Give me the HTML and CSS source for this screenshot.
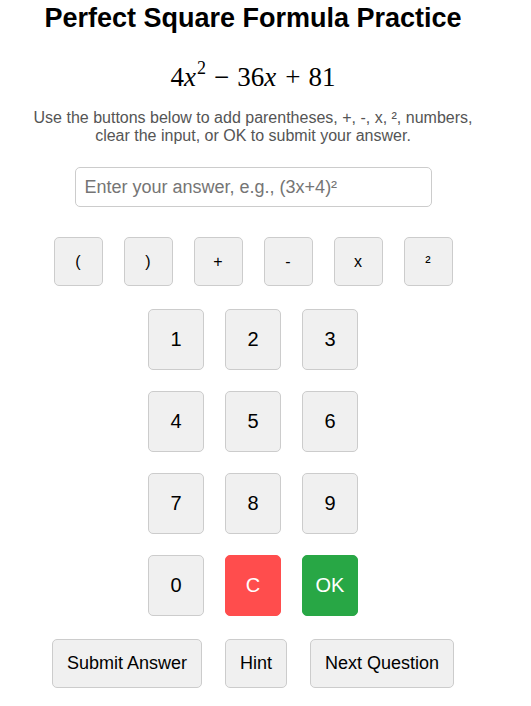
FILE: index.html
```html
<!DOCTYPE html>
<html>
<head>
<meta charset="utf-8">
<link rel="stylesheet" href="styles.css">
</head>
<body>
<div class="app">
  <h1 class="title">Perfect Square Formula Practice</h1>
  <div class="math"><span class="n">4</span><i>x</i><sup>2</sup><span class="op">−</span>36<i>x</i><span class="op">+</span>81</div>
  <p class="hint-text">Use the buttons below to add parentheses, +, -, x, ², numbers, clear the input, or OK to submit your answer.</p>
  <input class="answer" type="text" placeholder="Enter your answer, e.g., (3x+4)²">
  <div class="ops">
    <button class="btn op-btn">(</button>
    <button class="btn op-btn">)</button>
    <button class="btn op-btn">+</button>
    <button class="btn op-btn">-</button>
    <button class="btn op-btn">x</button>
    <button class="btn op-btn">²</button>
  </div>
  <div class="pad">
    <button class="btn key">1</button>
    <button class="btn key">2</button>
    <button class="btn key">3</button>
    <button class="btn key">4</button>
    <button class="btn key">5</button>
    <button class="btn key">6</button>
    <button class="btn key">7</button>
    <button class="btn key">8</button>
    <button class="btn key">9</button>
    <button class="btn key">0</button>
    <button class="btn key clear">C</button>
    <button class="btn key ok">OK</button>
  </div>
  <div class="actions">
    <button class="btn action">Submit Answer</button>
    <button class="btn action">Hint</button>
    <button class="btn action">Next Question</button>
  </div>
</div>
</body>
</html>
```

FILE: styles.css
```css
html, body {
  margin: 0;
  padding: 0;
  background: #fff;
}
body {
  font-family: "Liberation Sans", Arial, sans-serif;
  color: #000;
}
.app {
  width: 490px;
  margin: 0 8px;
  display: flex;
  flex-direction: column;
  align-items: center;
  text-align: center;
}
.title {
  font-size: 27px;
  font-weight: bold;
  line-height: 31px;
  margin: 3px 0 0 0;
}
.math {
  font-family: "Liberation Serif", "Times New Roman", serif;
  font-size: 27px;
  line-height: 30px;
  margin-top: 28px;
}
.math i {
  font-style: italic;
  padding-right: 1px;
}
.math sup {
  font-size: 18px;
  line-height: 0;
  vertical-align: 12px;
}
.math .op {
  padding: 0 8px;
}
.hint-text {
  font-size: 16px;
  line-height: 18px;
  color: #555;
  margin: 17px 0 0 0;
  width: 460px;
}
.answer {
  box-sizing: border-box;
  width: 357px;
  height: 40px;
  margin-top: 22px;
  border: 1px solid #ccc;
  border-radius: 5px;
  padding: 0 9px;
  font-family: "Liberation Sans", Arial, sans-serif;
  font-size: 18px;
  color: #000;
  outline: none;
}
.answer::placeholder {
  color: #757575;
}
.btn {
  box-sizing: border-box;
  font-family: "Liberation Sans", Arial, sans-serif;
  background: #f0f0f0;
  border: 1px solid #ccc;
  border-radius: 5px;
  color: #000;
  padding: 0;
  margin: 0;
}
.ops {
  display: flex;
  gap: 21px;
  margin-top: 30px;
}
.op-btn {
  width: 49px;
  height: 49px;
  font-size: 16px;
}
.pad {
  display: grid;
  grid-template-columns: repeat(3, 56px);
  gap: 21px 21px;
  margin-top: 23px;
}
.key {
  width: 56px;
  height: 61px;
  font-size: 20px;
}
.key.clear {
  background: #ff4d4d;
  border-color: #ff4d4d;
  color: #fff;
}
.key.ok {
  background: #28a745;
  border-color: #28a745;
  color: #fff;
}
.actions {
  display: flex;
  gap: 23px;
  margin-top: 23px;
}
.action {
  height: 49px;
  font-size: 18px;
  padding: 0 14px;
}
```
